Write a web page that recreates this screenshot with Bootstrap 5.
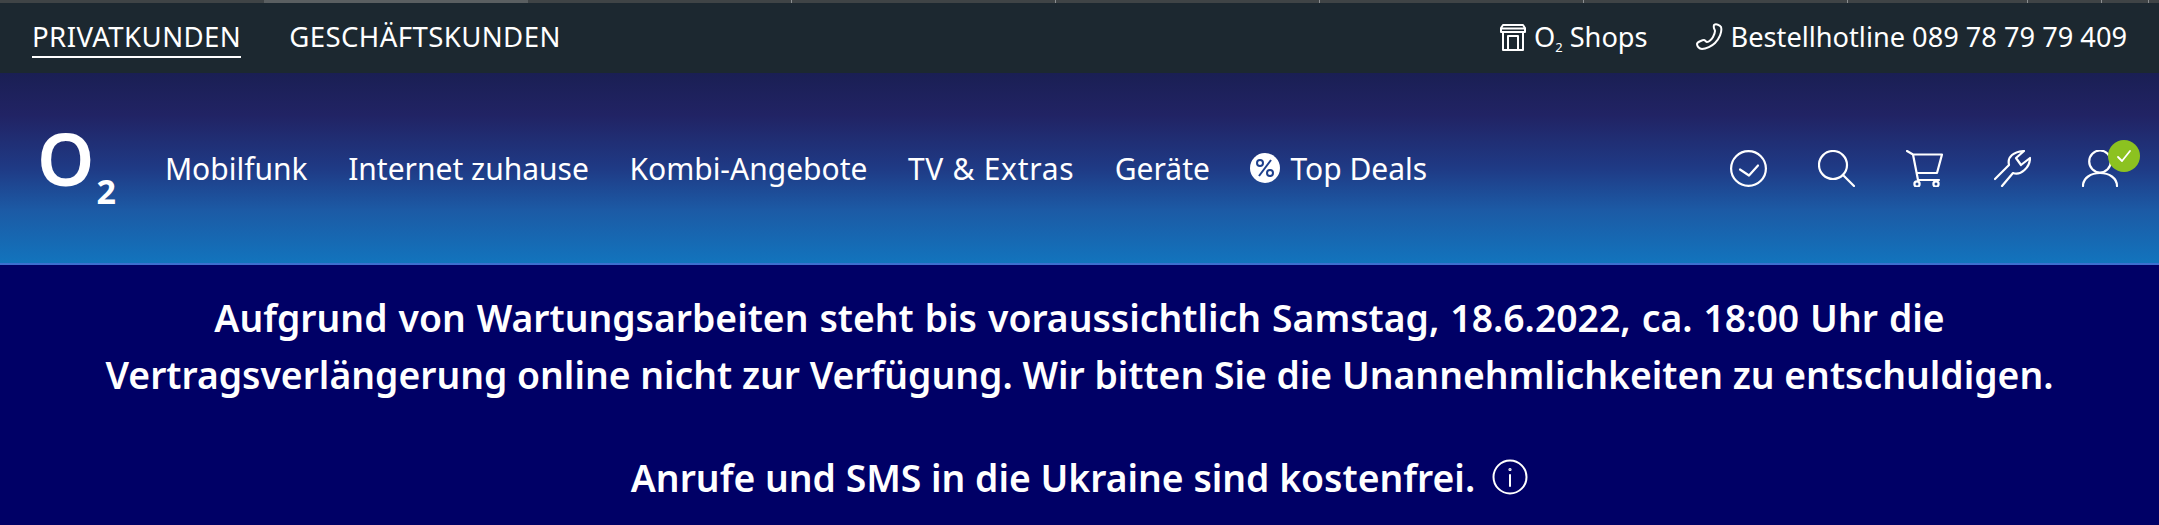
<!DOCTYPE html>
<html lang="de">
<head>
<meta charset="utf-8">
<title>o2 Privatkunden</title>
<link href="https://cdn.jsdelivr.net/npm/bootstrap@5.3.0/dist/css/bootstrap.min.css" rel="stylesheet">
<style>
html,body{height:525px;overflow:hidden;background:#000066;}
body{font-family:"Noto Sans","Open Sans",sans-serif;color:#fff;}
a{color:#fff;text-decoration:none;}
svg{display:block;flex:none;}
.ic{fill:none;stroke:#fff;stroke-linecap:round;stroke-linejoin:round;}
.tabstrip{height:3px;background:#3f4446;}
.tabcell{width:264px;border-right:1px solid #8b8f91;}
.tabcell.plain{border-right-color:transparent;}
.tabcell.active{background:#5a5f61;border-right-color:transparent;}
.tabcell.narrow-a{width:180px;}
.tabcell.narrow-b{width:74px;}
.tabcell.narrow-c{width:47px;}
.metabar{height:70px;background:#1c2830;padding:0 32px;font-weight:400;}
.metaleft{font-size:27.6px;letter-spacing:.4px;}
.metaright{font-size:27.2px;}
.metalink{height:40px;line-height:37px;margin-top:-1px;}
.metalink.on{border-bottom:2px solid #fff;}
.metagap{gap:48px;}
.metaright a{margin-top:-2px;}
.mainbar{height:192px;padding:0 40px 0 37px;background:linear-gradient(180deg,#1a1f54 0%,#212364 22%,#1f3a85 50%,#1c5aa5 72%,#1274bd 100%);border-bottom:2px solid #3c6fd0;}
.logomark{align-items:flex-start;height:72px;font-weight:600;margin-top:-2px;}
.logo-o{font-size:73px;line-height:53px;}
.logo-two{font-size:34px;line-height:24px;margin:48px 0 0 2px;font-weight:700;}
.mainnav{gap:40.5px;margin-left:49px;font-size:30px;}
.widetext{letter-spacing:.7px;}
.dealgap{gap:10px;}
.icons{gap:51px;}
.iconbox{width:37px;height:37px;}
.statusdot{position:absolute;top:-10px;left:26px;width:32px;height:32px;border-radius:50%;background:#8cc220;}
.notice{font-size:37.3px;font-weight:600;line-height:57px;text-align:center;padding-top:23.5px;}
.firstline{word-spacing:1.3px;}
.gaprow{height:46px;}
.subtwo{font-size:13px;font-weight:400;vertical-align:-5px;line-height:0;}
.infogap{gap:17px;}
</style>
</head>
<body>
<div class="tabstrip d-flex">
  <div class="tabcell plain"></div><div class="tabcell active"></div><div class="tabcell"></div><div class="tabcell"></div><div class="tabcell"></div><div class="tabcell"></div><div class="tabcell"></div><div class="tabcell narrow-a"></div><div class="tabcell narrow-b"></div><div class="tabcell narrow-c"></div>
</div>
<div class="metabar d-flex justify-content-between align-items-center">
  <nav class="d-flex metagap metaleft">
    <a class="metalink on" href="#">PRIVATKUNDEN</a>
    <a class="metalink" href="#">GESCHÄFTSKUNDEN</a>
  </nav>
  <div class="d-flex metagap metaright">
    <a class="d-flex align-items-center gap-2" href="#">
      <svg class="ic" width="26" height="28" viewBox="0 0 26 28" stroke-width="2"><path d="M3 2h20l2 3v4H1V5zM1 5.500h24M3 9v18h20V9M8 27V13h10v14"/></svg>
      <span>O<span class="subtwo">2</span> Shops</span>
    </a>
    <a class="d-flex align-items-center gap-2" href="#">
      <svg class="ic" width="27" height="27" viewBox="0 0 27 27" stroke-width="2"><path d="M18 2c2-1.500 6 0 7 2 1.500 5-2 12-6 16-3 3-9 6-13 6-3 0-5-3-5-5 0-2 6-4 7-4 1 0 2 2 3 2 2 0 5-3 6-5 1-2 2-4 2-6 0-2-2-2-1-6z"/></svg>
      <span>Bestellhotline 089 78 79 79 409</span>
    </a>
  </div>
</div>
<div class="mainbar d-flex justify-content-between align-items-center">
  <div class="d-flex align-items-center">
    <a class="logomark d-flex" href="#"><span class="logo-o">O</span><span class="logo-two">2</span></a>
    <nav class="mainnav d-flex align-items-center">
      <a href="#">Mobilfunk</a>
      <a href="#">Internet zuhause</a>
      <a href="#">Kombi-Angebote</a>
      <a class="widetext" href="#">TV &amp; Extras</a>
      <a href="#">Geräte</a>
      <a class="d-flex align-items-center dealgap" href="#">
        <svg width="30" height="30" viewBox="0 0 30 30"><circle cx="15" cy="15" r="15" fill="#fff"/><g fill="none" stroke="#1d3f8c" stroke-width="2"><circle cx="10" cy="10" r="3"/><circle cx="20" cy="20" r="3"/><path d="M21 7 9 23"/></g></svg>
        <span>Top Deals</span>
      </a>
    </nav>
  </div>
  <div class="icons d-flex align-items-center">
    <a class="iconbox" href="#"><svg class="ic" width="37" height="37" viewBox="0 0 37 37" stroke-width="2.2"><circle cx="18.500" cy="18.500" r="17.400"/><path d="M10 19.500l9 6 9-10"/></svg></a>
    <a class="iconbox" href="#"><svg class="ic" width="37" height="37" viewBox="0 0 37 37" stroke-width="2.2"><circle cx="15" cy="15" r="14"/><path d="M25 25l11 11"/></svg></a>
    <a class="iconbox" href="#"><svg class="ic" width="37" height="37" viewBox="0 0 37 37" stroke-width="2.2"><path d="M1 1l6 3.500L12 30h21M7 4.500h29L31 23H11.500"/><circle cx="11" cy="34" r="2.600"/><circle cx="30" cy="34" r="2.600"/></svg></a>
    <a class="iconbox" href="#"><svg class="ic" width="37" height="37" viewBox="0 0 37 37" stroke-width="2.2"><path d="M1 29l14-14C13 6 20 2 30 1l-8 7 5 7 9-7c0 9-9 18-17 15L8 36"/></svg></a>
    <a class="iconbox position-relative" href="#"><svg class="ic" width="37" height="37" viewBox="0 0 37 37" stroke-width="2.2"><ellipse cx="18" cy="11.500" rx="10.800" ry="11"/><path d="M1 36c0-8 8-13 17-13s17 5 17 13"/></svg>
      <span class="statusdot d-flex align-items-center justify-content-center"><svg class="ic" width="16" height="14" viewBox="0 0 16 14" stroke="#e9f3cf" stroke-width="1.800"><path d="M2 8l4 4L14 2"/></svg></span>
    </a>
  </div>
</div>
<div class="notice">
  <div class="firstline">Aufgrund von Wartungsarbeiten steht bis voraussichtlich Samstag, 18.6.2022, ca. 18:00 Uhr die</div>
  <div>Vertragsverlängerung online nicht zur Verfügung. Wir bitten Sie die Unannehmlichkeiten zu entschuldigen.</div>
  <div class="gaprow"></div>
  <div class="d-flex justify-content-center align-items-center infogap">
    <span>Anrufe und SMS in die Ukraine sind kostenfrei.</span>
    <svg class="ic" width="36" height="36" viewBox="0 0 36 36" stroke-width="2"><circle cx="18" cy="18" r="16.500"/><path d="M18 16v11"/><circle cx="18" cy="10.500" r=".6"/></svg>
  </div>
</div>
</body>
</html>
